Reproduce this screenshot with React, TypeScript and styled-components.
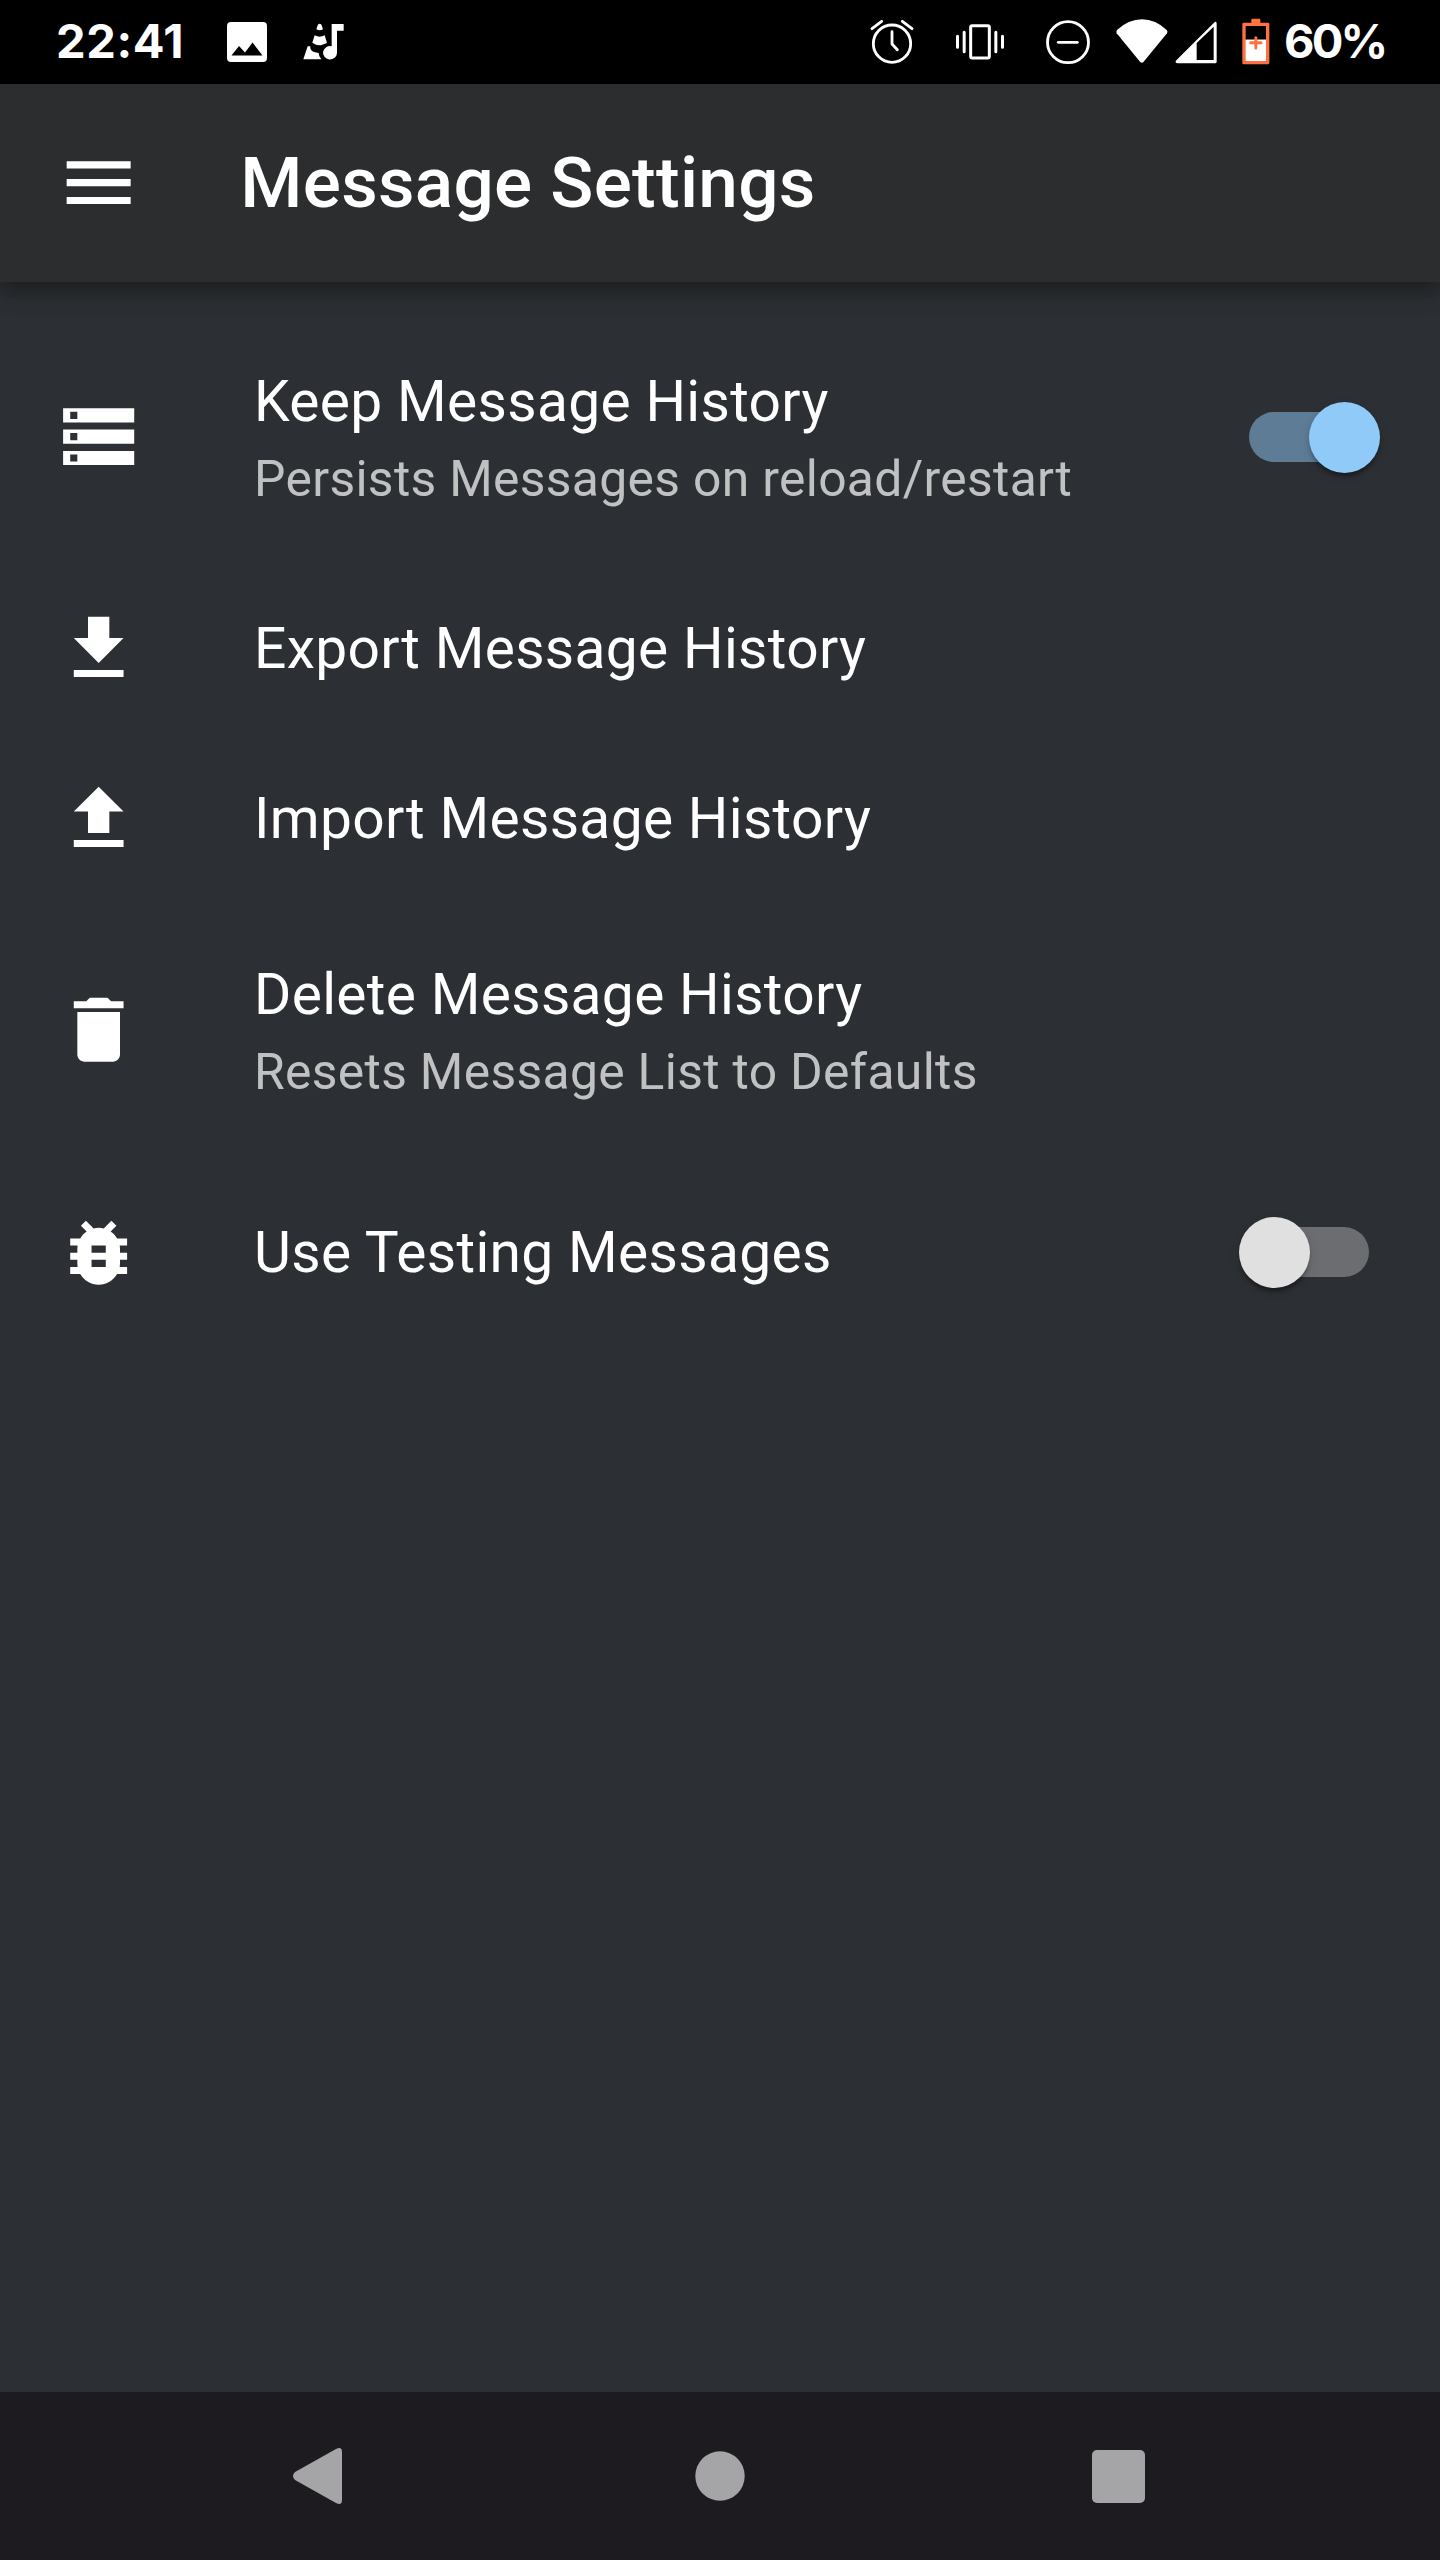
import React from 'react';
import styled, { createGlobalStyle } from 'styled-components';

const GlobalStyle = createGlobalStyle`
  *, *::before, *::after { box-sizing: border-box; }
  body { margin: 0; background: #2c2f33; }
`;

const Screen = styled.div`
  display: flex;
  flex-direction: column;
  width: 1440px;
  height: 2560px;
  overflow: hidden;
  background: #2c2f33;
  color: #fff;
  font-family: Roboto, 'Liberation Sans', sans-serif;
`;

const StatusBar = styled.header`
  flex: none;
  display: flex;
  align-items: center;
  justify-content: space-between;
  height: 84px;
  padding: 0 56px;
  background: #000;
`;

const StatusGroup = styled.div`
  display: flex;
  align-items: center;
  height: 84px;
`;

const StatusText = styled.span<{ $width: number; $spacing: number; $gap?: number }>`
  width: ${(p) => p.$width}px;
  margin-left: ${(p) => p.$gap ?? 0}px;
  padding-bottom: 3px;
  font-family: Inter, Roboto, sans-serif;
  font-size: 47px;
  font-weight: 650;
  line-height: 80px;
  letter-spacing: ${(p) => p.$spacing}px;
  white-space: nowrap;
`;

const StatusIcon = styled.svg<{ $gap: number }>`
  flex: none;
  display: block;
  margin-left: ${(p) => p.$gap}px;
`;

const AppBar = styled.div`
  flex: none;
  display: flex;
  align-items: center;
  height: 198px;
  padding-left: 55.6px;
  background: #2c2d2e;
  z-index: 1;
  box-shadow:
    0 7.1px 14.2px -3.6px rgba(0, 0, 0, 0.2),
    0 14.2px 17.8px 0 rgba(0, 0, 0, 0.14),
    0 3.6px 35.6px 0 rgba(0, 0, 0, 0.12);
`;

const Title = styled.h1`
  margin: 0 0 0 99.4px;
  font-size: 71.1px;
  font-weight: 500;
  line-height: 114px;
  letter-spacing: 0.28px;
  white-space: nowrap;
`;

const Icon = styled.svg`
  flex: none;
  display: block;
  width: 85.33px;
  height: 85.33px;
  fill: #fff;
`;

const List = styled.main`
  flex: 1;
  padding-top: 29px;
`;

const Row = styled.div<{ $height: number; $end?: number }>`
  display: flex;
  align-items: center;
  height: ${(p) => p.$height}px;
  padding: 0 ${(p) => p.$end ?? 60}px 0 55.5px;
`;

const Labels = styled.div`
  flex: 1;
  margin-left: 113.2px;
`;

const Primary = styled.div`
  font-size: 56.9px;
  line-height: 85.3px;
  letter-spacing: 0.33px;
  white-space: nowrap;
`;

const Secondary = styled.div`
  font-size: 49.8px;
  line-height: 71.2px;
  letter-spacing: 0.33px;
  color: rgba(255, 255, 255, 0.7);
  white-space: nowrap;
`;

const Track = styled.div<{ $on: boolean }>`
  display: flex;
  align-items: center;
  justify-content: ${(p) => (p.$on ? 'flex-end' : 'flex-start')};
  width: 121px;
  height: 50px;
  border-radius: 25px;
  background: ${(p) => (p.$on ? 'rgba(144, 202, 249, 0.5)' : 'rgba(255, 255, 255, 0.3)')};
`;

const Thumb = styled.div<{ $on: boolean }>`
  flex: none;
  width: 71px;
  height: 71px;
  margin: 0 -10px 0 -9px;
  border-radius: 50%;
  background: ${(p) => (p.$on ? '#90caf9' : '#e0e0e0')};
  box-shadow:
    0 7.1px 3.6px -3.6px rgba(0, 0, 0, 0.2),
    0 3.6px 3.6px 0 rgba(0, 0, 0, 0.14),
    0 3.6px 10.7px 0 rgba(0, 0, 0, 0.12);
`;

const NavBar = styled.nav`
  flex: none;
  display: flex;
  align-items: center;
  height: 168px;
  padding-left: 292px;
  background: #1d1b20;
`;

const NavIcon = styled.svg<{ $gap?: number }>`
  display: block;
  margin-left: ${(p) => p.$gap ?? 0}px;
  fill: #a5a5a7;
`;

const icons = {
  menu: 'M3 18h18v-2H3v2zm0-5h18v-2H3v2zm0-7v2h18V6H3z',
  storage:
    'M2 20h20v-4H2v4zm2-3h2v2H4v-2zM2 4v4h20V4H2zm4 3H4V5h2v2zm-4 7h20v-4H2v4zm2-3h2v2H4v-2z',
  download: 'M19 9h-4V3H9v6H5l7 7 7-7zM5 18v2h14v-2H5z',
  upload: 'M9 16h6v-6h4l-7-7-7 7h4zm-4 2h14v2H5z',
  trash: 'M6 19c0 1.1.9 2 2 2h8c1.1 0 2-.9 2-2V7H6v12zM19 4h-3.5l-1-1h-5l-1 1H5v2h14V4z',
  bug: 'M20 8h-2.81c-.45-.78-1.07-1.45-1.82-1.96L17 4.41 15.59 3l-2.17 2.17C12.96 5.06 12.49 5 12 5c-.49 0-.96.06-1.41.17L8.41 3 7 4.41l1.62 1.63C7.88 6.55 7.26 7.22 6.81 8H4v2h2.09c-.05.33-.09.66-.09 1v1H4v2h2v1c0 .34.04.67.09 1H4v2h2.81c1.04 1.79 2.97 3 5.19 3s4.15-1.21 5.19-3H20v-2h-2.09c.05-.33.09-.66.09-1v-1h2v-2h-2v-1c0-.34-.04-.67-.09-1H20V8zm-6 8h-4v-2h4v2zm0-4h-4v-2h4v2z',
};

type IconName = keyof typeof icons;

const Glyph = ({ name }: { name: IconName }) => (
  <Icon viewBox="0 0 24 24">
    <path d={icons[name]} />
  </Icon>
);

interface Setting {
  icon: IconName;
  title: string;
  detail?: string;
  on?: boolean;
  height: number;
  end?: number;
}

const settings: Setting[] = [
  {
    icon: 'storage',
    title: 'Keep Message History',
    detail: 'Persists Messages on reload/restart',
    on: true,
    height: 252,
    end: 70,
  },
  { icon: 'download', title: 'Export Message History', height: 170.4 },
  { icon: 'upload', title: 'Import Message History', height: 170.4 },
  {
    icon: 'trash',
    title: 'Delete Message History',
    detail: 'Resets Message List to Defaults',
    height: 252,
  },
  { icon: 'bug', title: 'Use Testing Messages', on: false, height: 193, end: 71 },
];

export default function App() {
  return (
    <>
      <GlobalStyle />
      <Screen>
        <StatusBar>
          <StatusGroup>
            <StatusText $width={130} $spacing={0.6}>
              22:41
            </StatusText>
            <StatusIcon $gap={39.500} width="42" height="42" viewBox="0 0 42 42">
              <path
                fill="#fff"
                fillRule="evenodd"
                d="M5 1h32a4 4 0 0 1 4 4v32a4 4 0 0 1-4 4H5a4 4 0 0 1-4-4V5a4 4 0 0 1 4-4zM5.5 34.500h31L26.500 21.500l-7.500 10-6-6.500z"
              />
            </StatusIcon>
            <StatusIcon $gap={35.500} width="42" height="40" viewBox="909 68 126 120">
              <g fill="#fff">
                <path d="M959 73q5 0 6 5l4 12q-10 6-20 0l4-12q1-5 6-5z" />
                <path d="M944 108q15 8 30 0l7 23-18 7q-14 1-26-8z" />
                <path d="M923 141h8q-2 12 11 17l14 3q0 10 8 19h-54z" />
                <path d="M995 74h36v20h-20v67a21 20 0 1 1-16-20z" />
              </g>
            </StatusIcon>
          </StatusGroup>
          <StatusGroup>
            <StatusIcon $gap={0} width="44" height="46" viewBox="90 58 132 138">
              <g fill="none" stroke="#fff" strokeWidth="8.500" strokeLinecap="round" strokeLinejoin="round">
                <circle cx="156" cy="132" r="56" />
                <path d="M156 96v37l16 17M96 87l29-22M187 65l29 22" />
              </g>
            </StatusIcon>
            <StatusIcon $gap={41} width="50" height="46" viewBox="345 56 150 138">
              <g fill="none" stroke="#fff" strokeWidth="9" strokeLinecap="round">
                <rect x="392" y="76" width="56" height="97" rx="5" />
                <path d="M352.500 108v33M372.500 96v58M467.500 96v58M487.500 108v33" />
              </g>
            </StatusIcon>
            <StatusIcon $gap={40} width="46" height="46" viewBox="615 56 138 138">
              <g fill="none" stroke="#fff" strokeWidth="8.500" strokeLinecap="round">
                <circle cx="684" cy="125.500" r="61.500" />
                <path d="M655 126h57" />
              </g>
            </StatusIcon>
            <StatusIcon $gap={24.500} width="52" height="46" viewBox="47 56 156 138">
              <path
                fill="#fff"
                d="M50 89Q85 57 125 57T199 89Q203 93 200 99L130 184Q125 190 119 184L49 99Q47 93 50 89z"
              />
            </StatusIcon>
            <StatusIcon $gap={7.500} width="44" height="46" viewBox="225 58 132 138">
              <path
                fill="#fff"
                fillRule="evenodd"
                d="M342 69Q350 63 350 72V186Q350 191 345 191H232Q223 190 229 182zM341 81L290 130V181H341z"
              />
            </StatusIcon>
            <StatusIcon $gap={22.500} width="28" height="48" viewBox="425 55 84 144">
              <path
                fill="#ff7043"
                d="M453 69V60q0-3 3-3h21q3 0 3 3v9h23q4 0 4 4v117q0 4-4 4h-73q-4 0-4-4V73q0-4 4-4z"
              />
              <path fill="#000" d="M436 79h61v41h-61z" />
              <path fill="#fff" d="M436 120h61v64h-61z" />
              <path stroke="#ff7043" strokeWidth="9" strokeLinecap="round" d="M451 129h31M466.500 114v31" />
            </StatusIcon>
            <StatusText $width={100} $spacing={-2.8} $gap={14.5}>
              60%
            </StatusText>
          </StatusGroup>
        </StatusBar>
        <AppBar>
          <Glyph name="menu" />
          <Title>Message Settings</Title>
        </AppBar>
        <List>
          {settings.map((s) => (
            <Row key={s.title} $height={s.height} $end={s.end}>
              <Glyph name={s.icon} />
              <Labels>
                <Primary>{s.title}</Primary>
                {s.detail && <Secondary>{s.detail}</Secondary>}
              </Labels>
              {s.on !== undefined && (
                <Track $on={s.on}>
                  <Thumb $on={s.on} />
                </Track>
              )}
            </Row>
          ))}
        </List>
        <NavBar>
          <NavIcon width="51" height="60" viewBox="0 0 51 60">
            <path d="M3 26L44 3Q50 0 50 6V54Q50 60 44 57L3 34Q-1 30 3 26z" />
          </NavIcon>
          <NavIcon $gap={352} width="50" height="50" viewBox="0 0 50 50">
            <circle cx="25" cy="25" r="24.700" />
          </NavIcon>
          <NavIcon $gap={346.500} width="53" height="53" viewBox="0 0 53 53">
            <rect width="53" height="53" rx="5" />
          </NavIcon>
        </NavBar>
      </Screen>
    </>
  );
}
